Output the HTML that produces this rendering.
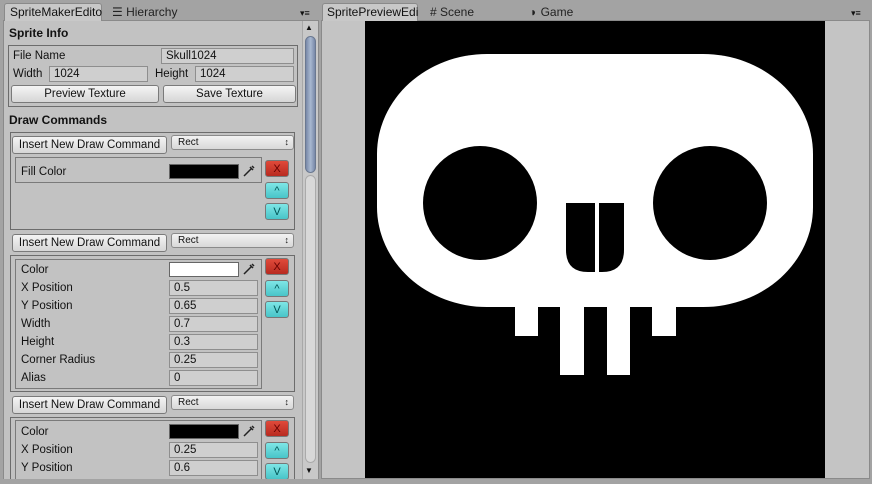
<!DOCTYPE html>
<html><head><meta charset="utf-8"><style>
*{margin:0;padding:0;box-sizing:border-box}
html,body{width:872px;height:484px}
body{background:#a3a3a3;position:relative;overflow:hidden;font-family:"Liberation Sans",sans-serif;font-size:11.5px;color:#111}
.a{position:absolute}
.panel{background:#c2c2c2;border:1px solid #8a8a8a}
.box{position:absolute;border:1px solid #6c6c6c}
.fld{position:absolute;height:16px;background:#cfcfcf;border:1px solid #8e8e8e;padding-left:4px;line-height:14px;font-size:11.5px}
.btn{position:absolute;height:18px;background:linear-gradient(#f4f4f4,#d6d6d6);border:1px solid #7a7a7a;border-radius:3px;text-align:center;line-height:16px;font-size:11.5px}
.dd{position:absolute;height:15px;background:linear-gradient(#f2f2f2,#d8d8d8);border:1px solid #8a8a8a;border-radius:3px;padding-left:6px;line-height:13px;font-size:10px}
.dd:after{content:"\2195";position:absolute;right:4px;top:0;font-size:9px}
.lbl{position:absolute;font-size:11.5px}
.x{position:absolute;width:24px;height:17px;border-radius:3px;text-align:center;font-size:11px;line-height:16px;border:1px solid #777}
.r{background:linear-gradient(#e04a3a,#b82a20);color:#600}
.c{background:linear-gradient(#7ee6e6,#48c4c8);color:#055}
.sw{position:absolute;width:70px;height:15px;border:1px solid #666}
.dr{position:absolute;width:14px;height:14px}
b{font-weight:bold}
#clip{position:absolute;left:0;top:0;width:320px;height:479px;overflow:hidden}
</style></head><body>
<div id="clip">
<div class="a panel" style="left:3px;top:20px;width:316px;height:460px"></div>
<div class="a" style="left:4px;top:3px;width:98px;height:18px;background:#c8c8c8;border:1px solid #8a8a8a;border-bottom:none;border-radius:3px 3px 0 0;padding-left:5px;line-height:17px;font-size:12px">SpriteMakerEdito</div>
<div class="a" style="left:112px;top:5px;font-size:12px;color:#222">&#9776; Hierarchy</div>
<div class="a" style="left:300px;top:8px;font-size:9px">&#9662;&#8801;</div>
<div class="a" style="left:9px;top:26px;font-size:12px"><b>Sprite Info</b></div>
<div class="box" style="left:8px;top:45px;width:290px;height:62px"></div>
<div class="lbl" style="left:13px;top:50px">File Name</div>
<div class="fld" style="left:161px;top:48px;width:133px">Skull1024</div>
<div class="lbl" style="left:13px;top:68px">Width</div>
<div class="fld" style="left:49px;top:66px;width:99px">1024</div>
<div class="lbl" style="left:155px;top:68px">Height</div>
<div class="fld" style="left:195px;top:66px;width:99px">1024</div>
<div class="btn" style="left:11px;top:85px;width:148px">Preview Texture</div>
<div class="btn" style="left:163px;top:85px;width:133px">Save Texture</div>
<div class="a" style="left:9px;top:113px;font-size:12px"><b>Draw Commands</b></div>

<div class="box" style="left:10px;top:132px;width:285px;height:98px"></div>
<div class="btn" style="left:12px;top:136px;width:155px">Insert New Draw Command</div>
<div class="dd" style="left:171px;top:135px;width:123px">Rect</div>
<div class="box" style="left:15px;top:157px;width:247px;height:26px;border-color:#7a7a7a"></div>
<div class="lbl" style="left:21px;top:166px">Fill Color</div>
<div class="sw" style="left:169px;top:164px;background:#000"></div>
<svg class="dr" style="left:242px;top:164px" viewBox="0 0 14 14"><path d="M2 12 L9 5 M8 3 L11 6 M10 2 L12 4" stroke="#222" stroke-width="1.5" fill="none"/></svg>
<div class="x r" style="left:265px;top:160px">X</div>
<div class="x c" style="left:265px;top:182px">^</div>
<div class="x c" style="left:265px;top:203px">V</div>

<div class="btn" style="left:12px;top:234px;width:155px">Insert New Draw Command</div>
<div class="dd" style="left:171px;top:233px;width:123px">Rect</div>
<div class="box" style="left:10px;top:255px;width:285px;height:137px"></div>
<div class="box" style="left:15px;top:259px;width:247px;height:130px;border-color:#7a7a7a"></div>
<div class="lbl" style="left:21px;top:264px">Color</div>
<div class="sw" style="left:169px;top:262px;background:#fff"></div>
<svg class="dr" style="left:242px;top:262px" viewBox="0 0 14 14"><path d="M2 12 L9 5 M8 3 L11 6 M10 2 L12 4" stroke="#222" stroke-width="1.5" fill="none"/></svg>
<div class="lbl" style="left:21px;top:282px">X Position</div><div class="fld" style="left:169px;top:280px;width:89px">0.5</div>
<div class="lbl" style="left:21px;top:300px">Y Position</div><div class="fld" style="left:169px;top:298px;width:89px">0.65</div>
<div class="lbl" style="left:21px;top:318px">Width</div><div class="fld" style="left:169px;top:316px;width:89px">0.7</div>
<div class="lbl" style="left:21px;top:336px">Height</div><div class="fld" style="left:169px;top:334px;width:89px">0.3</div>
<div class="lbl" style="left:21px;top:354px">Corner Radius</div><div class="fld" style="left:169px;top:352px;width:89px">0.25</div>
<div class="lbl" style="left:21px;top:372px">Alias</div><div class="fld" style="left:169px;top:370px;width:89px">0</div>
<div class="x r" style="left:265px;top:258px">X</div>
<div class="x c" style="left:265px;top:280px">^</div>
<div class="x c" style="left:265px;top:301px">V</div>

<div class="btn" style="left:12px;top:396px;width:155px">Insert New Draw Command</div>
<div class="dd" style="left:171px;top:395px;width:123px">Rect</div>
<div class="box" style="left:10px;top:417px;width:285px;height:70px"></div>
<div class="box" style="left:15px;top:420px;width:247px;height:70px;border-color:#7a7a7a"></div>
<div class="lbl" style="left:21px;top:426px">Color</div>
<div class="sw" style="left:169px;top:424px;background:#000"></div>
<svg class="dr" style="left:242px;top:424px" viewBox="0 0 14 14"><path d="M2 12 L9 5 M8 3 L11 6 M10 2 L12 4" stroke="#222" stroke-width="1.5" fill="none"/></svg>
<div class="lbl" style="left:21px;top:444px">X Position</div><div class="fld" style="left:169px;top:442px;width:89px">0.25</div>
<div class="lbl" style="left:21px;top:462px">Y Position</div><div class="fld" style="left:169px;top:460px;width:89px">0.6</div>
<div class="x r" style="left:265px;top:420px">X</div>
<div class="x c" style="left:265px;top:442px">^</div>
<div class="x c" style="left:265px;top:463px">V</div>

<div class="a" style="left:302px;top:21px;width:16px;height:458px;background:#c8c8c8;border-left:1px solid #a8a8a8"></div>
<div class="a" style="left:305px;top:23px;font-size:8px">&#9650;</div>
<div class="a" style="left:305px;top:36px;width:11px;height:137px;border-radius:6px;background:linear-gradient(90deg,#7888a8,#a8b8d0,#7888a8);border:1px solid #6a7890"></div>
<div class="a" style="left:305px;top:175px;width:11px;height:288px;border-radius:6px;background:#d8d8d8;border:1px solid #aaa"></div>
<div class="a" style="left:305px;top:466px;font-size:8px">&#9660;</div>
</div>

<div class="a panel" style="left:321px;top:20px;width:549px;height:459px;background:#c4c4c4"></div>
<div class="a" style="left:322px;top:3px;width:96px;height:18px;background:#c8c8c8;border:1px solid #8a8a8a;border-bottom:none;border-radius:3px 3px 0 0;padding-left:4px;line-height:17px;font-size:12px">SpritePreviewEdi</div>
<div class="a" style="left:430px;top:5px;font-size:12px;color:#222"># Scene</div>
<div class="a" style="left:530px;top:5px;font-size:12px;color:#222">&#9687; Game</div>
<div class="a" style="left:851px;top:8px;font-size:9px">&#9662;&#8801;</div>
<svg class="a" style="left:365px;top:21px" width="460" height="457" viewBox="365 21 460 457">
<rect x="365" y="21" width="460" height="457" fill="#000"/>
<rect x="377" y="54" width="436" height="253" rx="110" ry="100" fill="#fff"/>
<circle cx="480" cy="203" r="57" fill="#000"/>
<circle cx="710" cy="203" r="57" fill="#000"/>
<path d="M566 203 H624 V250 Q624 272 602 272 H588 Q566 272 566 250 Z" fill="#000"/>
<rect x="595" y="203" width="4" height="70" fill="#fff"/>
<rect x="515" y="305" width="23" height="31" fill="#fff"/>
<rect x="560" y="305" width="24" height="70" fill="#fff"/>
<rect x="607" y="305" width="23" height="70" fill="#fff"/>
<rect x="652" y="305" width="24" height="31" fill="#fff"/>
</svg>
</body></html>
